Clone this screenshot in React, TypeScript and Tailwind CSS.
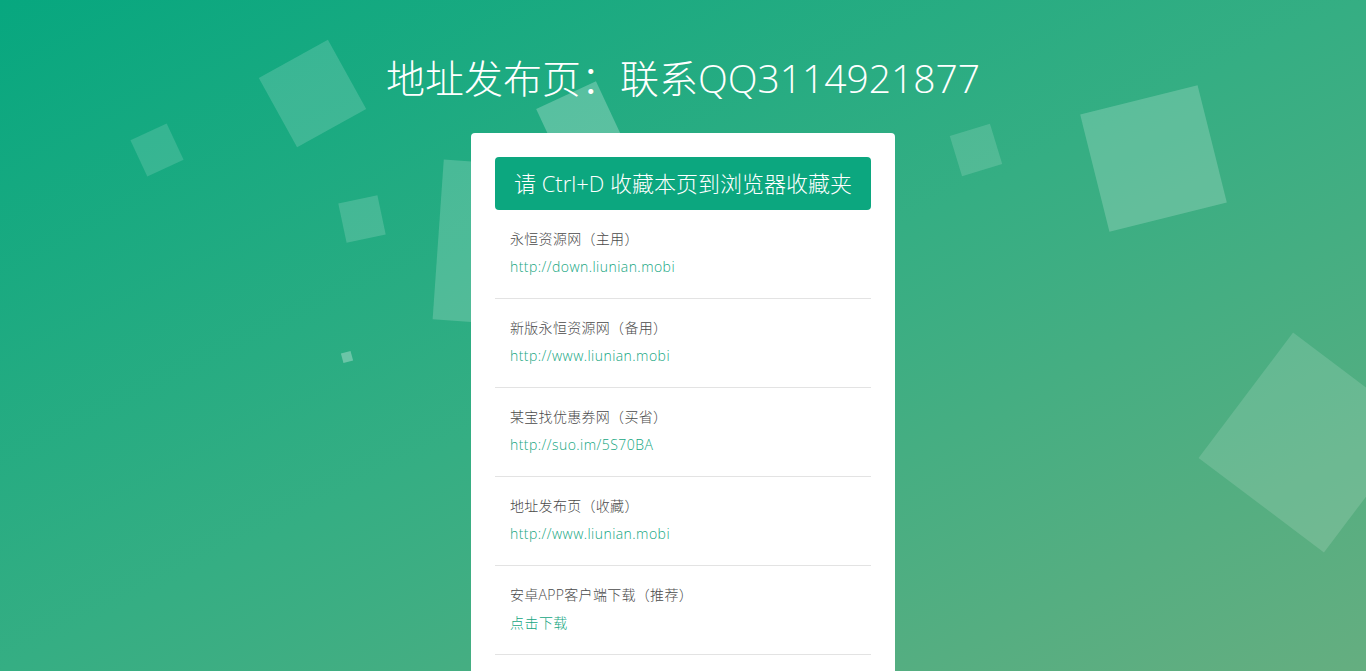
const squares = [
  { x: 312, y: 93, s: 79, r: -29, o: 0.16 },
  { x: 157, y: 150, s: 40, r: -25, o: 0.14 },
  { x: 362, y: 219, s: 40, r: -12, o: 0.16 },
  { x: 518, y: 245, s: 160, r: 4, o: 0.18 },
  { x: 580, y: 125, s: 66, r: -25, o: 0.25 },
  { x: 347, y: 357, s: 10, r: -15, o: 0.3 },
  { x: 976, y: 150, s: 42, r: -17, o: 0.15 },
  { x: 1153, y: 158, s: 121, r: -14, o: 0.2 },
  { x: 1308, y: 442, s: 157, r: 37, o: 0.14 },
];

const links = [
  { title: "永恒资源网（主用）", url: "http://down.liunian.mobi" },
  { title: "新版永恒资源网（备用）", url: "http://www.liunian.mobi" },
  { title: "某宝找优惠券网（买省）", url: "http://suo.im/5S70BA" },
  { title: "地址发布页（收藏）", url: "http://www.liunian.mobi" },
  { title: "安卓APP客户端下载（推荐）", url: "点击下载" },
];

export default function App() {
  return (
    <div
      className="relative h-[671px] w-full overflow-hidden bg-[linear-gradient(to_bottom_right,#07a77f_0%,#35ae83_50%,#65ae80_100%)] font-light"
      style={{ fontFamily: '"Open Sans", "Noto Sans CJK SC", sans-serif' }}
    >
      {squares.map((q, i) => (
        <div
          key={i}
          className="absolute bg-white"
          style={{
            left: q.x - q.s / 2,
            top: q.y - q.s / 2,
            width: q.s,
            height: q.s,
            opacity: q.o,
            transform: `rotate(${q.r}deg)`,
          }}
        />
      ))}

      <div className="relative flex flex-col items-center">
        <h1 className="mt-[50px] h-[56px] text-[39px] leading-[56px] font-light text-white">
          地址发布页：联系QQ3114921877
        </h1>

        <div className="mt-[27px] w-[424px] rounded-[4px] bg-white px-6 pt-6">
          <div className="flex h-[53px] items-center justify-center rounded-[4px] bg-[#0ca77f] text-[22px] font-light text-white">
            请 Ctrl+D 收藏本页到浏览器收藏夹
          </div>
          {links.map((l, i) => (
            <div key={i} className="border-b border-[#e3e3e3] px-[15px] pt-[19px] pb-[21px] text-[14px] leading-[20px]">
              <div className="tracking-[0.3px] text-[#4a4a4a]">{l.title}</div>
              <div className="mt-2 tracking-[0.45px] text-[#14a67f]">{l.url}</div>
            </div>
          ))}
          <div className="h-10" />
        </div>
      </div>
    </div>
  );
}
